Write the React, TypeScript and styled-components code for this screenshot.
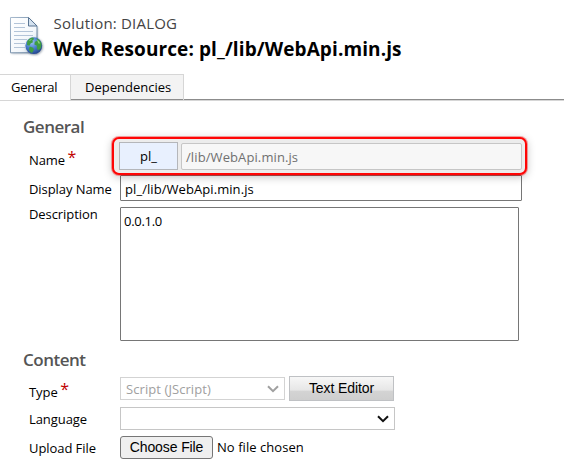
import React from "react";
import styled, { createGlobalStyle, css } from "styled-components";

const Global = createGlobalStyle`
  *, *::before, *::after { box-sizing: border-box; }
  html, body { margin: 0; background: #fff; overflow: hidden; }
  body { font: 13px/18px "Open Sans", "Noto Sans", sans-serif; color: #000; }
`;

const Page = styled.main`
  width: 564px;
  height: 468px;
  background: #fff;
  overflow: hidden;
`;

const Header = styled.header`
  display: flex;
  height: 74px;
  padding: 13px 0 0 8px;
  gap: 8.6px;
  > svg {
    margin-top: 1px;
  }
`;

const Heading = styled.div`
  display: flex;
  flex-direction: column;
`;

const Solution = styled.div`
  font-size: 15px;
  line-height: 20px;
  letter-spacing: 0.2px;
  color: #444;
`;

const Title = styled.h1`
  margin: 3px 0 0;
  font-size: 19px;
  line-height: 26px;
  font-weight: 700;
  letter-spacing: 0.1px;
  white-space: nowrap;
`;

const Tabs = styled.nav`
  display: flex;
  height: 27px;
`;

const Tab = styled.div<{ $active?: boolean }>`
  width: ${(p) => (p.$active ? 71 : 113)}px;
  padding: 3px 0 0 ${(p) => (p.$active ? 11 : 14)}px;
  border: solid #d6d6d6;
  border-width: 1px 1px 1px 0;
  letter-spacing: ${(p) => (p.$active ? -0.2 : 0)}px;
  ${(p) =>
    !p.$active &&
    css`
      background: #f3f3f3;
      box-shadow: inset 0 -1px #8c8c8c;
    `}
`;

const TabRule = styled.div`
  flex: 1;
  border-bottom: 1px solid #d6d6d6;
  box-shadow: inset 0 -1px #8c8c8c;
`;

const Section = styled.section`
  padding-left: 23px;
`;

const SectionTitle = styled.h2<{ $top: number; $h: number }>`
  margin: 0;
  height: ${(p) => p.$h}px;
  padding-top: ${(p) => p.$top}px;
  font-size: 17px;
  line-height: 22px;
  font-weight: 600;
  letter-spacing: -0.5px;
  color: #555;
`;

const Row = styled.div<{ $h: number; $pad: number }>`
  display: grid;
  grid-template-columns: 91px 1fr;
  height: ${(p) => p.$h}px;
  padding-left: 6px;
  > label {
    margin-top: ${(p) => p.$pad}px;
    letter-spacing: -0.07px;
    white-space: nowrap;
  }
`;

const Star = styled.span`
  margin-left: 2.5px;
  font-size: 16px;
  line-height: 0;
  vertical-align: 2px;
  color: #c00000;
`;

const Highlight = styled.div`
  position: relative;
  z-index: 1;
  display: flex;
  align-items: flex-start;
  gap: 3px;
  width: 415px;
  height: 38px;
  margin-left: -8px;
  padding: 3px 0 0 5px;
  border: 2px solid #ff0505;
  border-radius: 7px;
  background: #ececec;
  box-shadow: 0 0 0 1px rgba(255, 0, 0, 0.35), 0 2px 9px rgba(0, 0, 0, 0.25);
`;

const Prefix = styled.div`
  width: 59px;
  height: 28px;
  padding-top: 4px;
  border: 1px solid #b4b6ba;
  background: #e8f0fe;
  text-align: center;
`;

const NameValue = styled.div`
  width: 341px;
  height: 27px;
  margin-top: 1px;
  padding: 4px 4px;
  border: 1px solid #c6c6c6;
  border-radius: 2px;
  background: #f7f7f7;
  color: #707070;
  letter-spacing: 0.1px;
`;

const Field = styled.div<{ $w: number; $h: number; $pad: string }>`
  width: ${(p) => p.$w}px;
  height: ${(p) => p.$h}px;
  padding: ${(p) => p.$pad};
  border: 1px solid #767676;
  border-radius: 1px;
  letter-spacing: 0.07px;
`;

const Version = styled.span`
  letter-spacing: -0.3px;
`;

const Inline = styled.div<{ $gap: number }>`
  display: flex;
  align-items: flex-start;
  gap: ${(p) => p.$gap}px;
`;

const Select = styled.div<{ $w: number; $disabled?: boolean }>`
  display: flex;
  align-items: center;
  justify-content: space-between;
  width: ${(p) => p.$w}px;
  height: 23px;
  padding: 0 5px;
  border: 1px solid ${(p) => (p.$disabled ? "#d3d3d3" : "#c6c6c6")};
  color: ${(p) => (p.$disabled ? "#a0a0a0" : "#111")};
  letter-spacing: 0.08px;
`;

const EditorButton = styled.div`
  width: 105px;
  height: 25px;
  margin-top: -1px;
  border: 1px solid #bfc1c4;
  background: linear-gradient(#f7f7f7, #e6e6e6 58%, #d4d4d4 60%, #cecece);
  font: 14px/22px "Liberation Sans", Arial, sans-serif;
  letter-spacing: -0.1px;
  text-align: center;
`;

const FileButton = styled.div`
  width: 93px;
  height: 23px;
  border: 1px solid #767676;
  border-radius: 3px;
  background: #efefef;
  font: 14px/20px "Liberation Sans", Arial, sans-serif;
  letter-spacing: -0.1px;
  text-align: center;
`;

const FileStatus = styled.span`
  padding-top: 2px;
  letter-spacing: 0.05px;
`;

const Chevron = () => (
  <svg width="12" height="8" viewBox="0 0 12 8" fill="none">
    <path d="M1 1.2 6 6.2 11 1.2" stroke="currentColor" strokeWidth="2" />
  </svg>
);

const DocumentIcon = () => (
  <svg width="37" height="44" viewBox="0 0 37 44">
    <defs>
      <linearGradient id="paper" x1="0" y1="0" x2="1" y2="1">
        <stop offset="0" stopColor="#fff" />
        <stop offset=".65" stopColor="#f3f7fb" />
        <stop offset="1" stopColor="#cbd9e8" />
      </linearGradient>
      <linearGradient id="edge" x1="0" y1="0" x2="1" y2="1">
        <stop offset="0" stopColor="#a9bbcf" />
        <stop offset="1" stopColor="#52708f" />
      </linearGradient>
      <radialGradient id="sea" cx=".38" cy=".3" r=".72">
        <stop offset="0" stopColor="#9cc3f3" />
        <stop offset=".5" stopColor="#4b7fd0" />
        <stop offset="1" stopColor="#24468e" />
      </radialGradient>
      <filter id="soft" x="-20%" y="-20%" width="140%" height="140%">
        <feGaussianBlur stdDeviation=".8" />
      </filter>
    </defs>
    <path d="M3.5 4.5H21l9 9V40H3.5Z" fill="#8493a3" opacity=".5" filter="url(#soft)" />
    <path d="M2.5 3.5H20.5L29 12V38.8H2.5Z" fill="url(#paper)" stroke="url(#edge)" />
    <path d="M20.5 3.5V12H29Z" fill="#d3e1ef" stroke="#5a7593" />
    <path
      d="M6 9.5H17M6 13.5H17M6 17.5H25M6 21.5H25M6 25.5H19M6 29.5H17M6 33.5H17"
      stroke="#b3c4d8"
    />
    <circle cx="26.5" cy="32.5" r="8.6" fill="#58677c" opacity=".6" filter="url(#soft)" />
    <circle cx="25.8" cy="31.7" r="8.4" fill="url(#sea)" />
    <path
      d="M19.2 27.2q2.2-3.4 5.8-3.7l1.2 1.6-1.8 1.3.6 1.8-2.4 1.4-1.2 2.2-2.4-.7ZM28.6 24.2q4 1.7 5 5.8l-.6 4-2.6 2.6-1.6-2.2.2-2.6-2.6-1.2.4-2.8 2.6-1ZM21.6 32.6l3.6 1.2.8 2-2 3.2q-2.4-.9-3.2-3Z"
      fill="#3f9d45"
    />
    <path d="M28.8 25.6q2.7 1.4 3.4 4l-1.8-.2ZM20.6 27q1.6-2 3.5-2.3l-1.4 1.7Z" fill="#8fd07c" />
  </svg>
);

export default function App() {
  return (
    <Page>
      <Global />
      <Header>
        <DocumentIcon />
        <Heading>
          <Solution>Solution: DIALOG</Solution>
          <Title>Web Resource: pl_/lib/WebApi.min.js</Title>
        </Heading>
      </Header>
      <Tabs>
        <Tab $active>General</Tab>
        <Tab>Dependencies</Tab>
        <TabRule />
      </Tabs>
      <Section>
        <SectionTitle $top={15} $h={36}>General</SectionTitle>
        <Row $h={38} $pad={14}>
          <label>
            Name<Star>*</Star>
          </label>
          <Highlight>
            <Prefix>pl_</Prefix>
            <NameValue>/lib/WebApi.min.js</NameValue>
          </Highlight>
        </Row>
        <Row $h={32} $pad={5}>
          <label>Display Name</label>
          <Field $w={402} $h={26} $pad="4px 4px">
            pl_/lib/WebApi.min.js
          </Field>
        </Row>
        <Row $h={134} $pad={-2}>
          <label>Description</label>
          <Field $w={399} $h={134} $pad="4px 3px">
            <Version>0.0.1.0</Version>
          </Field>
        </Row>
      </Section>
      <Section>
        <SectionTitle $top={8} $h={36}>Content</SectionTitle>
        <Row $h={30} $pad={6}>
          <label>
            Type<Star>*</Star>
          </label>
          <Inline $gap={4}>
            <Select $w={165} $disabled>
              Script (JScript)
              <Chevron />
            </Select>
            <EditorButton>Text Editor</EditorButton>
          </Inline>
        </Row>
        <Row $h={29} $pad={3}>
          <label>Language</label>
          <Select $w={275}>
            <span />
            <Chevron />
          </Select>
        </Row>
        <Row $h={23} $pad={3}>
          <label>Upload File</label>
          <Inline $gap={4}>
            <FileButton>Choose File</FileButton>
            <FileStatus>No file chosen</FileStatus>
          </Inline>
        </Row>
      </Section>
    </Page>
  );
}
